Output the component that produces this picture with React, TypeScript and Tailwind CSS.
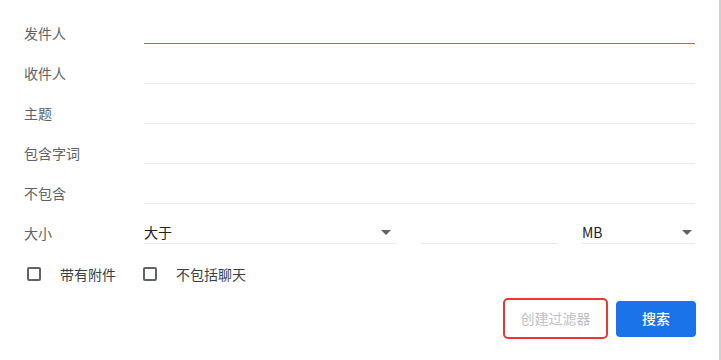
import React from 'react';

const font = { fontFamily: '"Noto Sans CJK SC", "Noto Sans", sans-serif' };

const Caret = () => (
  <svg width="10" height="5" viewBox="0 0 10 5" className="shrink-0">
    <path d="M0 0 L10 0 L5 5 Z" fill="#5f6368" />
  </svg>
);

const Checkbox = ({ label }: { label: string }) => (
  <label className="flex items-center">
    <span className="ml-[3px] h-[14px] w-[14px] rounded-[2px] border-2 border-[#5f6368]" />
    <span className="ml-[19px] pb-px text-[14px] leading-5 text-[#3c4043]">{label}</span>
  </label>
);

const FieldRow = ({ label, active }: { label: string; active?: boolean }) => (
  <div className="flex h-10 items-end">
    <div className="w-[120px] pb-px text-[14px] leading-5 text-[#5f6368]">{label}</div>
    <div
      className={
        active
          ? 'h-5 flex-1 border-b border-[#4a80dc]'
          : 'h-5 flex-1 border-b border-[#e8eaed]'
      }
    />
  </div>
);

export default function App() {
  const fields = ['收件人', '主题', '包含字词', '不包含'];

  return (
    <div
      className="h-[360px] w-[721px] border-r-2 border-[#d0d0d0] bg-white pl-6 pr-6 pt-1"
      style={font}
    >
      <FieldRow label="发件人" active />
      {fields.map((f) => (
        <FieldRow key={f} label={f} />
      ))}

      {/* size row */}
      <div className="flex h-10 items-end">
        <div className="w-[120px] pb-px text-[14px] leading-5 text-[#5f6368]">大小</div>
        <div className="flex w-[252px] items-center justify-between border-b border-[#e8eaed] pb-px pr-[5px] text-[14px] leading-5 text-[#202124]">
          <span>大于</span>
          <Caret />
        </div>
        <div className="ml-[25px] h-5 w-[136px] border-b border-[#e8eaed]" />
        <div className="ml-[25px] flex flex-1 items-center justify-between border-b border-[#e8eaed] pb-px pr-[3px] text-[14px] leading-5 text-[#202124]">
          <span>MB</span>
          <Caret />
        </div>
      </div>

      {/* checkboxes */}
      <div className="mt-[10px] flex h-10 items-center gap-6">
        <Checkbox label="带有附件" />
        <Checkbox label="不包括聊天" />
      </div>

      {/* actions */}
      <div className="-mr-px mt-1 flex items-center justify-end gap-2">
        <button className="flex h-[41px] w-[105px] items-center justify-center rounded-[5px] border-2 border-[#e53935] bg-white text-[14px] text-[#bdc1c6]">
          创建过滤器
        </button>
        <button className="h-9 w-20 rounded-[4px] bg-[#1a73e8] text-[14px] font-medium text-white">
          搜索
        </button>
      </div>
    </div>
  );
}
